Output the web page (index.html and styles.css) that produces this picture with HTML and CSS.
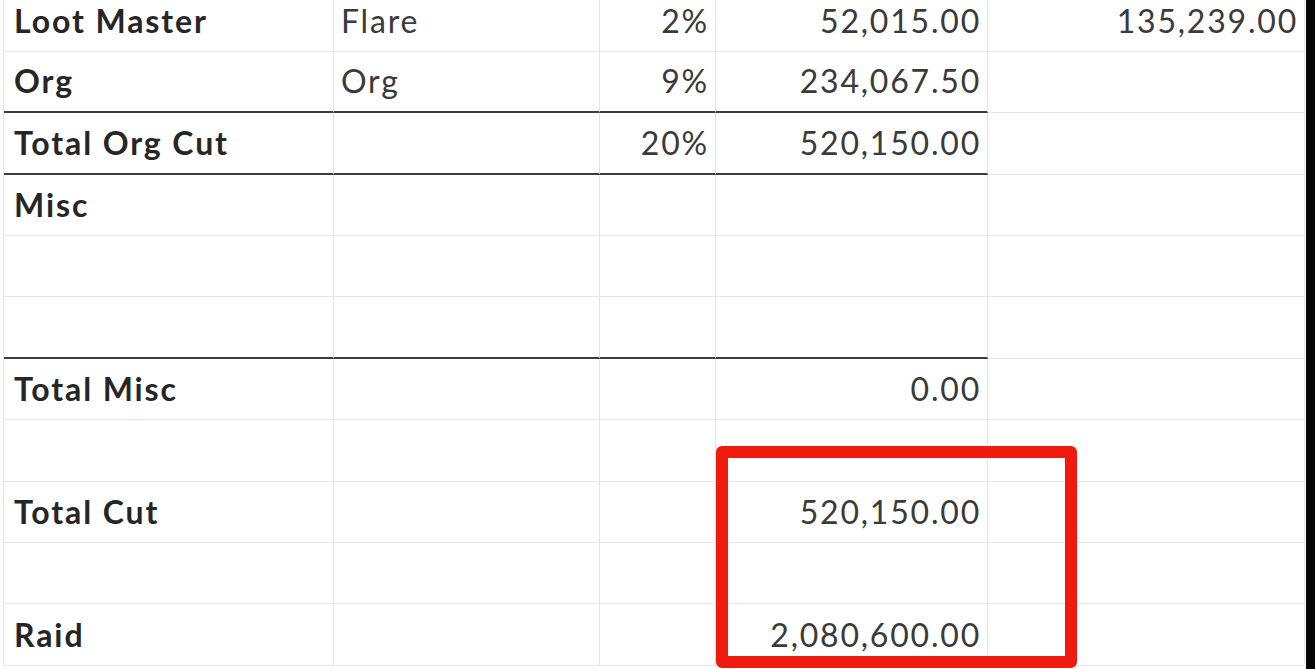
FILE: index.html
```html
<!DOCTYPE html>
<html>
<head>
    <meta charset="UTF-8">
    <title>Raid Cut</title>
    <link rel="stylesheet" href="styles.css">
</head>
<body>
    <div class="screen">
        <div class="sheet">
            <!-- Loot Master -->
            <div class="cell label">Loot Master</div>
            <div class="cell">Flare</div>
            <div class="cell num">2%</div>
            <div class="cell num">52,015.00</div>
            <div class="cell num">135,239.00</div>

            <!-- Org -->
            <div class="cell label total-top">Org</div>
            <div class="cell total-top">Org</div>
            <div class="cell num total-top">9%</div>
            <div class="cell num total-top">234,067.50</div>
            <div class="cell num"></div>

            <!-- Total Org Cut -->
            <div class="cell label total-top">Total Org Cut</div>
            <div class="cell total-top"></div>
            <div class="cell num total-top">20%</div>
            <div class="cell num total-top">520,150.00</div>
            <div class="cell"></div>

            <!-- Misc -->
            <div class="cell label">Misc</div>
            <div class="cell"></div>
            <div class="cell"></div>
            <div class="cell"></div>
            <div class="cell"></div>

            <div class="cell"></div>
            <div class="cell"></div>
            <div class="cell"></div>
            <div class="cell"></div>
            <div class="cell"></div>

            <div class="cell total-top"></div>
            <div class="cell total-top"></div>
            <div class="cell total-top"></div>
            <div class="cell total-top"></div>
            <div class="cell"></div>

            <!-- Total Misc -->
            <div class="cell label">Total Misc</div>
            <div class="cell"></div>
            <div class="cell"></div>
            <div class="cell num">0.00</div>
            <div class="cell"></div>

            <div class="cell"></div>
            <div class="cell"></div>
            <div class="cell"></div>
            <div class="cell"></div>
            <div class="cell"></div>

            <!-- Total Cut -->
            <div class="cell label">Total Cut</div>
            <div class="cell"></div>
            <div class="cell"></div>
            <div class="cell num">520,150.00</div>
            <div class="cell"></div>

            <div class="cell"></div>
            <div class="cell"></div>
            <div class="cell"></div>
            <div class="cell"></div>
            <div class="cell"></div>

            <!-- Raid -->
            <div class="cell label">Raid</div>
            <div class="cell"></div>
            <div class="cell"></div>
            <div class="cell num">2,080,600.00</div>
            <div class="cell"></div>
        </div>
        <div class="edge"></div>

        <div class="highlight"></div>
    </div>
</body>
</html>
```

FILE: styles.css
```css
body {
    margin: 0;
    background: #ffffff;
    overflow: hidden;
    font-family: Lato, "Open Sans", sans-serif;
}

.screen {
    position: relative;
    width: 1316px;
    height: 669px;
    display: flex;
    padding-left: 3px;
    box-sizing: border-box;
    overflow: hidden;
}

.sheet {
    display: grid;
    grid-template-columns: 330px 266px 116px 272px 317px;
    grid-template-rows: repeat(11, 61.4px);
    margin-top: -9.5px;
    border-left: 1px solid #e3e3e3;
    height: max-content;
}

.cell {
    display: flex;
    align-items: flex-end;
    box-sizing: border-box;
    padding: 0 6px 14px 7px;
    border-right: 1px solid #e3e3e3;
    border-bottom: 1px solid #e6e6e6;
    font-size: 32px;
    letter-spacing: 1.8px;
    line-height: 1;
    color: #3a3a3a;
    white-space: nowrap;
}

.label {
    font-weight: bold;
    color: #262626;
    letter-spacing: 1.9px;
    padding-left: 10px;
}

.num {
    justify-content: flex-end;
}

/* accounting borders under the sums */
.total-top {
    border-bottom: 2px solid #3c3c3c;
}

.edge {
    width: 9px;
    height: 100%;
    background: #050505;
    margin-left: 1px;
}

.highlight {
    position: absolute;
    left: 716px;
    top: 446px;
    width: 361px;
    height: 222px;
    box-sizing: border-box;
    border: 12px solid #f01b0e;
    border-radius: 6px;
}
```
